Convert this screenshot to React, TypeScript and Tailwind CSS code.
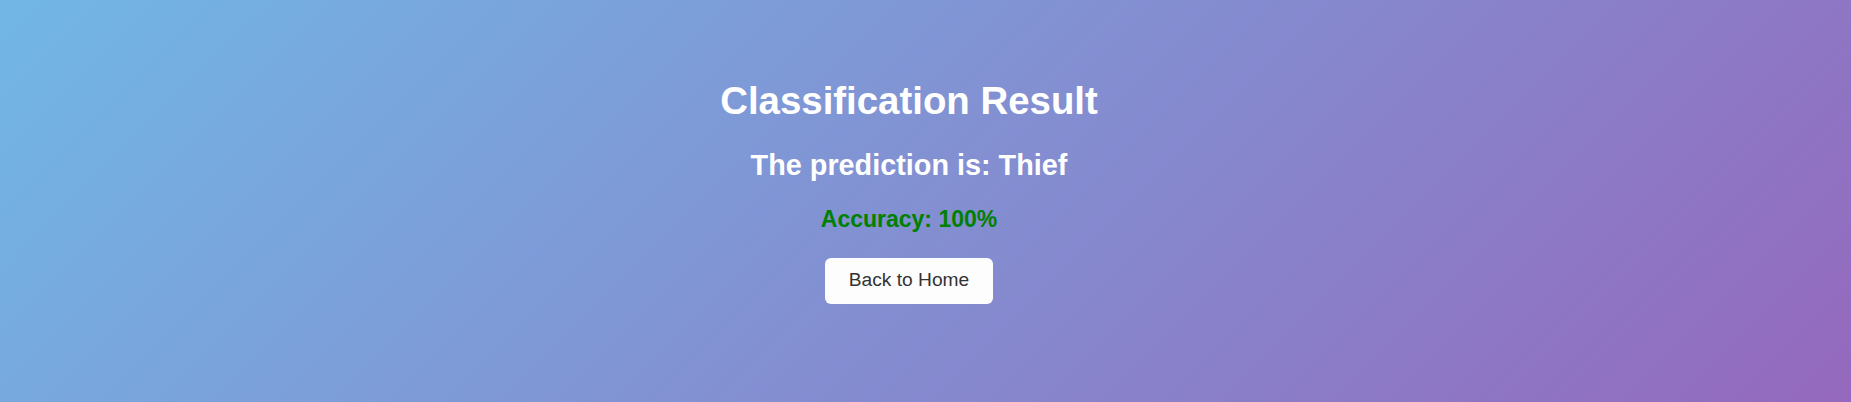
export default function App() {
  return (
    <div
      className="min-h-screen w-full bg-[linear-gradient(135deg,#71b7e6,#9b59b6)] bg-[length:100%_840px] bg-top bg-no-repeat pr-[33px] pt-[79px]"
      style={{ fontFamily: '"Liberation Sans", Arial, sans-serif' }}
    >
      <div className="flex flex-col items-center text-center">
        <h1 className="text-[38.4px] leading-[44px] font-bold text-white">
          Classification Result
        </h1>
        <h2 className="mt-[25.5px] text-[28.8px] leading-[33px] font-bold text-white">
          The prediction is: Thief
        </h2>
        <p className="mt-[24px] text-[23px] leading-[26px] font-bold text-[#008000]">
          Accuracy: 100%
        </p>
        <button className="mt-[26px] h-[46px] px-[24px] rounded-[6px] bg-[#fdfdfd] text-[19.2px] text-[#333]">
          Back to Home
        </button>
      </div>
    </div>
  );
}
